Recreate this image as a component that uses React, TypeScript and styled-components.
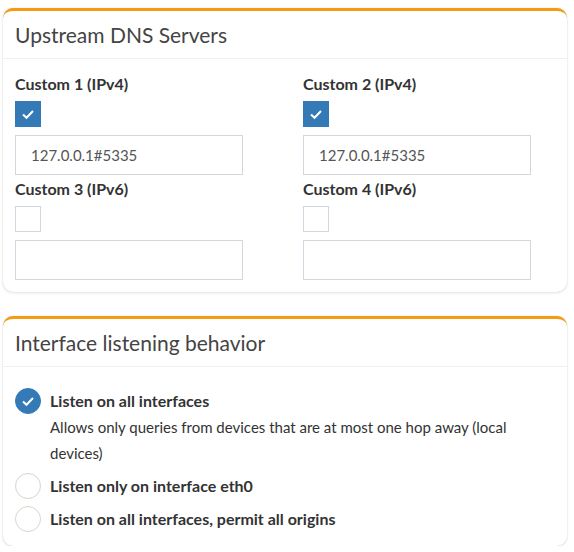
import styled, { createGlobalStyle } from 'styled-components';

const Global = createGlobalStyle`
  body { margin: 0; background: #fff; font-family: Lato, "Noto Sans", sans-serif; color: #333; }
`;

const Page = styled.div`
  padding: 8px 7px 0 3px;
  display: flex;
  flex-direction: column;
  gap: 24px;
`;

const Card = styled.div`
  border-top: 3px solid #f39c12;
  border-radius: 10px;
  box-shadow: 0 0 1px rgba(0, 0, 0, 0.2), 0 1px 3px rgba(0, 0, 0, 0.1);
  overflow: hidden;
  background: #fff;
`;

const Header = styled.div`
  height: 47px;
  display: flex;
  align-items: center;
  padding: 0 12px;
  font-size: 21px;
  color: #444;
  border-bottom: 1px solid #f0f0f0;
`;

const Grid = styled.div`
  display: grid;
  grid-template-columns: 288px 288px;
  padding: 15px 12px 12px;
  row-gap: 4px;
`;

const Field = styled.div`
  display: flex;
  flex-direction: column;
  align-items: flex-start;
`;

const Label = styled.div`
  font-weight: bold;
  font-size: 16px;
  line-height: 19px;
  margin-bottom: 8px;
`;

const Box = styled.div<{ $on?: boolean }>`
  width: 26px;
  height: 26px;
  box-sizing: border-box;
  border: 1px solid ${({ $on }) => ($on ? '#337ab7' : '#d2d6de')};
  background: ${({ $on }) => ($on ? '#337ab7' : '#fff')};
  display: flex;
  align-items: center;
  justify-content: center;
  margin-bottom: 8px;
`;

const Input = styled.div`
  width: 228px;
  height: 40px;
  box-sizing: border-box;
  border: 1px solid #d2d6de;
  padding: 0 15px;
  display: flex;
  align-items: center;
  font-size: 15px;
  color: #555;
`;

const RadioList = styled.div`
  padding: 21px 12px 14px;
  display: flex;
  flex-direction: column;
  gap: 7px;
`;

const RadioRow = styled.div`
  display: flex;
  gap: 9px;
`;

const Circle = styled.div<{ $on?: boolean }>`
  width: 26px;
  height: 26px;
  flex: none;
  box-sizing: border-box;
  border-radius: 50%;
  border: 1px solid ${({ $on }) => ($on ? '#337ab7' : '#d8d4cc')};
  background: ${({ $on }) => ($on ? '#337ab7' : '#fff')};
  display: flex;
  align-items: center;
  justify-content: center;
`;

const RadioText = styled.div`
  font-size: 16px;
  line-height: 26px;
  font-weight: bold;
`;

const Help = styled.div`
  font-weight: normal;
  font-size: 15px;
  line-height: 26px;
  padding-right: 20px;
`;

const Check = () => (
  <svg width="16" height="16" viewBox="0 0 16 16">
    <path d="M3 8.5l3.5 3.3L13 5" fill="none" stroke="#fff" strokeWidth="2" />
  </svg>
);

const fields = [
  { label: 'Custom 1 (IPv4)', on: true, value: '127.0.0.1#5335' },
  { label: 'Custom 2 (IPv4)', on: true, value: '127.0.0.1#5335' },
  { label: 'Custom 3 (IPv6)', on: false, value: '' },
  { label: 'Custom 4 (IPv6)', on: false, value: '' },
];

export default function App() {
  return (
    <Page>
      <Global />
      <Card>
        <Header>Upstream DNS Servers</Header>
        <Grid>
          {fields.map((f) => (
            <Field key={f.label}>
              <Label>{f.label}</Label>
              <Box $on={f.on}>{f.on && <Check />}</Box>
              <Input>{f.value}</Input>
            </Field>
          ))}
        </Grid>
      </Card>
      <Card>
        <Header>Interface listening behavior</Header>
        <RadioList>
          <RadioRow>
            <Circle $on><Check /></Circle>
            <RadioText>
              Listen on all interfaces
              <Help>Allows only queries from devices that are at most one hop away (local devices)</Help>
            </RadioText>
          </RadioRow>
          <RadioRow>
            <Circle />
            <RadioText>Listen only on interface eth0</RadioText>
          </RadioRow>
          <RadioRow>
            <Circle />
            <RadioText>Listen on all interfaces, permit all origins</RadioText>
          </RadioRow>
        </RadioList>
      </Card>
    </Page>
  );
}
